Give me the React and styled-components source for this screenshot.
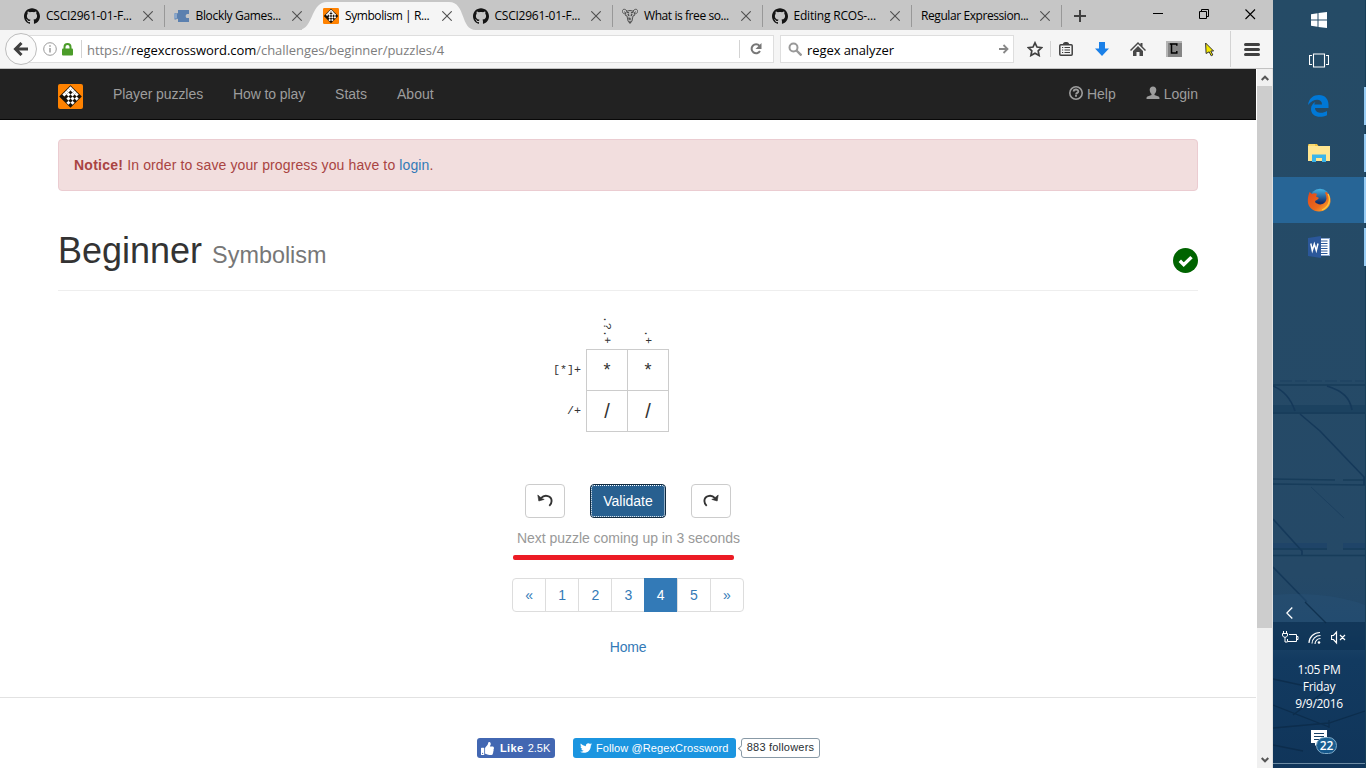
import React from "react";
import styled, { createGlobalStyle } from "styled-components";
import { SiGithub } from "react-icons/si";
import { FaTwitter, FaThumbsUp } from "react-icons/fa";

const GlobalStyle = createGlobalStyle`
  * { box-sizing: border-box; }
  html, body { margin: 0; padding: 0; overflow: hidden; }
  svg { display: block; flex: none; }
  a { color: #337ab7; text-decoration: none; }
`;

const ui = `"Open Sans", "Noto Sans", sans-serif`;

const Desktop = styled.div`
  display: flex;
  width: 1366px;
  height: 768px;
  background: #fff;
`;

const Browser = styled.div`
  width: 1273px;
  height: 768px;
  display: flex;
  flex-direction: column;
`;

/* ---------- tab strip ---------- */

const TabStrip = styled.div`
  height: 30px;
  background: #c6c6c6;
  display: flex;
  padding-left: 15px;
  font: 12px/30px ${ui};
  color: #000;
`;

const Tab = styled.div`
  position: relative;
  width: 149.5px;
  height: 30px;
  display: flex;
  align-items: center;
  padding: 2px 12px 0 9px;
  flex: none;
  &::after {
    content: "";
    position: absolute;
    right: 0;
    top: 5px;
    width: 1px;
    height: 22px;
    background: ${(p) => (p.$noLine ? "transparent" : "#989898")};
  }
`;

const TabShape = styled.svg`
  position: absolute;
  left: -12px;
  top: 0;
`;

const TabTitle = styled.span`
  position: relative;
  margin-left: ${(p) => (p.$bare ? 0 : 6)}px;
  flex: 1;
  white-space: nowrap;
  letter-spacing: ${(p) => p.$ls || 0}px;
`;

const TabIcon = styled.span`
  position: relative;
  width: 16px;
  height: 16px;
  color: #141414;
`;

const TabClose = styled.svg`
  position: relative;
`;

const WindowButtons = styled.div`
  display: flex;
  margin-left: auto;
  align-items: flex-start;
  padding: 8px 17px 0 0;
  gap: 34px;
`;

const NewTab = styled.div`
  padding: 10px 0 0 12px;
`;

/* ---------- toolbar ---------- */

const Toolbar = styled.div`
  height: 39px;
  background: #f5f5f5;
  border-bottom: 1px solid #c2c2c2;
  display: flex;
  align-items: flex-start;
  padding: 5px 0 0 5px;
`;

const BackButton = styled.div`
  position: relative;
  width: 32px;
  height: 32px;
  margin-top: -2px;
  border: 1px solid #bdbdbd;
  border-radius: 50%;
  background: #fafafa;
  display: flex;
  align-items: center;
  justify-content: center;
  z-index: 1;
`;

const AddressBar = styled.div`
  width: 308px;
  flex: none;
  height: 28px;
  background: #fff;
  border: 1px solid #dedede;
  display: flex;
  align-items: center;
  font: 13px/28px ${ui};
  color: #7d7d7d;
  white-space: nowrap;
  b { font-weight: 400; color: #000; }
`;

const UrlBar = styled(AddressBar)`
  width: 747px;
  margin-left: -10px;
  padding: 0 11px 0 15px;
`;

const UrlText = styled.span`
  margin-left: 5px;
  padding-top: 2px;
  flex: 1;
  letter-spacing: ${(p) => p.$ls}px;
`;

const SearchBar = styled(AddressBar)`
  width: 234px;
  margin-left: 6px;
  padding: 0 4px 0 7px;
`;

const SearchText = styled.span`
  margin-left: 5px;
  padding-top: 2px;
  flex: 1;
  color: #000;
  letter-spacing: ${(p) => p.$ls}px;
`;

const VLine = styled.div`
  width: 1px;
  height: ${(p) => p.$h}px;
  background: #d3d3d3;
  margin-left: ${(p) => p.$ml || 0}px;
`;

const Tools = styled.div`
  display: flex;
  align-items: center;
  height: 28px;
  padding-left: 13px;
`;

const Tool = styled.div`
  margin-left: ${(p) => p.$ml || 0}px;
`;

/* ---------- page ---------- */

const Viewport = styled.div`
  display: flex;
  height: 699px;
`;

const Page = styled.div`
  width: 1256px;
  height: 699px;
  font: 14px/20px "Liberation Sans", Arial, sans-serif;
  color: #333;
  display: flex;
  flex-direction: column;
  align-items: center;
`;

const Navbar = styled.nav`
  width: 1256px;
  height: 51px;
  background: #222;
  border-bottom: 1px solid #080808;
  display: flex;
  padding: 15px 58px 0;
  color: #9d9d9d;
`;

const Brand = styled.div`
  width: 55px;
`;

const NavLink = styled.div`
  margin-right: ${(p) => (p.$last ? 0 : 30)}px;
  letter-spacing: ${(p) => p.$ls || 0}px;
  display: flex;
  gap: 4px;
  height: 20px;
`;

const NavRight = styled.div`
  margin-left: auto;
  display: flex;
`;

const Alert = styled.div`
  width: 1140px;
  height: 52px;
  margin-top: 19px;
  padding: 15px;
  border: 1px solid #ebccd1;
  border-radius: 4px;
  background: #f2dede;
  color: #a94442;
  letter-spacing: 0.12px;
  strong { letter-spacing: 0.25px; }
`;

const PageHeader = styled.header`
  width: 1140px;
  height: 60px;
  margin-top: 40px;
  border-bottom: 1px solid #eee;
  display: flex;
  justify-content: space-between;
`;

const Title = styled.h1`
  margin: 0;
  font-weight: 400;
  font-size: 36px;
  line-height: 40px;
`;

const Subtitle = styled.small`
  font-size: 23.4px;
  color: #777;
`;

const Solved = styled.div`
  padding-top: 17px;
`;

const Puzzle = styled.div`
  display: grid;
  grid-template-columns: 74px 83px;
  grid-template-rows: 33px 83px;
  width: 232px;
  margin-top: 25px;
  font-family: "Liberation Mono", monospace;
`;

const TopClues = styled.div`
  grid-column: 2;
  display: flex;
  align-items: flex-end;
  padding: 0 0 5px;
`;

const TopClue = styled.div`
  width: 41px;
  writing-mode: vertical-rl;
  text-align: end;
  font-size: 11.6px;
  line-height: 39px;
`;

const SideClues = styled.div`
  text-align: right;
  padding-right: 5px;
  font-size: 11.7px;
  line-height: 41px;
  padding-top: 1px;
`;

const Cells = styled.div`
  display: grid;
  grid-template-columns: 41px 41px;
  grid-template-rows: 41px 41px;
  border: solid #ccc;
  border-width: 1px 0 0 1px;
`;

const Cell = styled.div`
  border: solid #ccc;
  border-width: 0 1px 1px 0;
  text-align: center;
  font: ${(p) => p.$size || 18}px/40px "Liberation Sans", sans-serif;
`;

const Controls = styled.div`
  display: flex;
  gap: 25px;
  margin-top: 52px;
`;

const Button = styled.button`
  width: 40px;
  height: 34px;
  padding: 0;
  border: 1px solid #ccc;
  border-radius: 4px;
  background: #fff;
  display: flex;
  align-items: center;
  justify-content: center;
`;

const PrimaryButton = styled(Button)`
  width: 76px;
  background: #286090;
  border: 1px solid #122b40;
  outline: 1px dotted #fff;
  outline-offset: -2px;
  color: #fff;
  font: 14px "Liberation Sans", sans-serif;
`;

const Countdown = styled.div`
  margin-top: 10px;
  padding-left: 1px;
  letter-spacing: -0.03px;
  color: #999;
`;

const Progress = styled.div`
  width: 221px;
  height: 5px;
  margin: 7px 9px 0 0;
  border-radius: 2px;
  background: #ec1b24;
`;

const Pagination = styled.div`
  display: flex;
  width: 232px;
  height: 34px;
  margin-top: 18px;
  border: 1px solid #ddd;
  border-radius: 4px;
`;

const PageItem = styled.a`
  flex: 1;
  text-align: center;
  line-height: 32px;
  margin: ${(p) => (p.$active ? "-1px 0 -1px -1px" : "0")};
  padding-top: ${(p) => (p.$active ? 1 : 0)}px;
  border-left: ${(p) => (p.$first ? 0 : 1)}px solid ${(p) => (p.$active ? "#337ab7" : "#ddd")};
  ${(p) => p.$active && "color:#fff;background:#337ab7;"}
`;

const HomeLink = styled.a`
  margin-top: 25px;
  letter-spacing: -0.2px;
`;

const Footer = styled.footer`
  width: 1256px;
  margin-top: 40px;
  border-top: 1px solid #e2e2e2;
  padding: 40px 0 0 477px;
  display: flex;
`;

const LikeButton = styled.div`
  width: 78px;
  height: 20px;
  border-radius: 3px;
  background: #4267b2;
  color: #fff;
  font: 11px/20px "Liberation Sans", sans-serif;
  display: flex;
  align-items: center;
  padding-left: 4px;
  white-space: nowrap;
  b { margin: 0 4px 0 6px; letter-spacing: 0.4px; }
`;

const FollowButton = styled.div`
  width: 163px;
  height: 20px;
  margin-left: 18px;
  border-radius: 3px;
  background: #1b95e0;
  color: #fff;
  font: 11px/19px "Liberation Sans", sans-serif;
  letter-spacing: 0.1px;
  display: flex;
  align-items: center;
  gap: 4px;
  padding-left: 7px;
  white-space: nowrap;
`;

const FollowerCount = styled.div`
  position: relative;
  width: 79px;
  height: 20px;
  margin-left: 5px;
  border: 1px solid #8899a6;
  border-radius: 3px;
  color: #292f33;
  font: 11px/17px "Liberation Sans", sans-serif;
  letter-spacing: 0.2px;
  text-align: center;
  &::before {
    content: "";
    position: absolute;
    left: -3px;
    top: 7px;
    width: 4px;
    height: 4px;
    background: #fff;
    border: solid #8899a6;
    border-width: 0 0 1px 1px;
    transform: rotate(45deg);
  }
`;

const Scrollbar = styled.div`
  width: 17px;
  height: 699px;
  border: solid #fff;
  border-width: 0 0 0 1px;
  border-right: 1px solid #e0e0e0;
  background: #f0f0f0;
  display: flex;
  flex-direction: column;
  align-items: center;
  padding-top: 6px;
`;

const Thumb = styled.div`
  width: 15px;
  height: 542px;
  margin: 5px 0 129px;
  background: #cdcdcd;
`;

/* ---------- taskbar ---------- */

const Taskbar = styled.aside`
  position: relative;
  width: 93px;
  height: 768px;
  background: #254b66;
  color: #fff;
  font: 12px/17px ${ui};
  display: flex;
  flex-direction: column;
`;

const Wallpaper = styled.svg`
  position: absolute;
  left: 0;
  top: 0;
`;

const TaskItem = styled.div`
  position: relative;
  height: ${(p) => p.$h || 47}px;
  display: flex;
  align-items: center;
  justify-content: center;
  padding-right: 1px;
  flex: none;
`;

const AppItem = styled(TaskItem)`
  height: 46px;
  padding-right: 2px;
  margin-bottom: 1px;
  background: ${(p) => (p.$active ? "#276596" : "transparent")};
  &::after {
    content: "";
    position: absolute;
    right: 0;
    top: ${(p) => (p.$active ? 0 : 4)}px;
    width: 2px;
    height: ${(p) => (p.$active ? 46 : 38)}px;
    background: #99cdf5;
  }
`;

const Chevron = styled.div`
  position: relative;
  margin: 336px 0 0 13px;
`;

const Tray = styled.div`
  position: relative;
  display: flex;
  gap: 9px;
  margin: 11px 0 0 9px;
  height: 15px;
`;

const Clock = styled.div`
  position: relative;
  text-align: center;
  margin-top: 16px;
  padding-right: 1px;
  div { letter-spacing: -0.3px; }
`;

const ActionCenter = styled.div`
  position: relative;
  margin: 18px 0 0 38px;
`;

const Badge = styled.div`
  position: absolute;
  left: 5px;
  top: 7px;
  width: 21px;
  height: 17px;
  border-radius: 9px;
  border: 1px solid #7ea9c6;
  background: linear-gradient(#1d6394, #14568a);
  font: 600 12px/15px ${ui};
  text-align: center;
`;

/* ---------- drawings ---------- */

const LOGO_CELLS = ["11110", "10101", "11010", "10101", "00010"];

const RegexLogo = ({ size }) => (
  <svg width={size} height={size} viewBox="0 0 25 25">
    <rect width="25" height="25" rx="2" fill="#ff8200" />
    <path d="M12.5 1.2l11.300 11.300-11.300 11.300L1.200 12.500z" fill="#1a1208" />
    <g fill="#fff" transform="translate(12.5 2.300) rotate(45)">
      {LOGO_CELLS.flatMap((row, j) =>
        [...row].map((c, i) =>
          c === "1" ? <rect key={`${i}-${j}`} x={i * 2.9} y={j * 2.9} width="2.9" height="2.9" /> : null
        )
      )}
    </g>
  </svg>
);

const Puzzlet = () => (
  <svg width="16" height="16" viewBox="0 0 16 16">
    <path fill="#5b80af" d="M4 2h11v4h-1c-3-1-3 5 0 4h1v4H4v-3C3 10 2 12 .5 11.500V5.500C2 5 3 6 4 5z" />
    <path fill="#8ba7ca" d="M0 5.500h3v5H0z" />
  </svg>
);

const Gnu = () => (
  <svg width="16" height="16" viewBox="0 0 16 16" fill="none" stroke="#555" strokeWidth="1">
    <path d="M5 3C2-.5-.5 2 .7 4.500 2 7 4 4.500 2.500 3.500M11 3c3-3.500 5.500-1 4.300 1.500-1.300 2.500-3.300 0-1.800-1" />
    <path d="M4 4c2-2 6-2 8 0l1 3-2 1-1 5-2 2.500L6 13 5 8 3 7z" fill="#b5b5b5" />
    <path d="M6 6l1 2M10 6L9 8M7 11h2M7 9.500v2M8 13v2M5 4l2 1M11 4L9 5" stroke="#333" />
  </svg>
);

const Cross = () => (
  <TabClose width="10" height="10" viewBox="0 0 10 10" stroke="#505050" strokeWidth="1.1">
    <path d="M.3.3l9.400 9.400M9.700.3L.3 9.700" />
  </TabClose>
);

const githubIcon = <SiGithub size={16} />;

const TABS = [
  { title: "CSCI2961-01-F...", icon: githubIcon, ls: -0.25 },
  { title: "Blockly Games...", icon: <Puzzlet />, noLine: true, ls: -0.33 },
  { title: "Symbolism | R...", icon: <RegexLogo size={16} />, active: true, noLine: true, ls: -0.42 },
  { title: "CSCI2961-01-F...", icon: githubIcon, ls: -0.25 },
  { title: "What is free so...", icon: <Gnu />, ls: -0.42 },
  { title: "Editing RCOS-...", icon: githubIcon, ls: -0.2 },
  { title: "Regular Expression...", ls: -0.42 },
];

const Tabs = () => (
  <TabStrip>
    {TABS.map((t, i) => (
      <Tab key={i} $noLine={t.noLine}>
        {t.active && (
          <TabShape width="176" height="30" viewBox="0 0 176 30">
            <path fill="#f5f5f5" d="M-4 30C12 30 8 2 25 2H147C164 2 158 30 174 30z" />
          </TabShape>
        )}
        {t.icon && <TabIcon>{t.icon}</TabIcon>}
        <TabTitle $bare={!t.icon} $ls={t.ls}>{t.title}</TabTitle>
        <Cross />
      </Tab>
    ))}
    <NewTab>
      <svg width="13" height="12" viewBox="0 0 13 12" stroke="#404040" strokeWidth="2"><path d="M0 6h12M6 0v12" /></svg>
    </NewTab>
    <WindowButtons>
      <svg width="12" height="12" viewBox="0 0 12 12"><path d="M1 5.500h10" stroke="#000" /></svg>
      <svg width="12" height="12" viewBox="0 0 12 12" fill="none" stroke="#000"><path d="M1.500 3.500h7v7h-7zM3.500 3.500v-2h7v7h-2" /></svg>
      <svg width="12" height="12" viewBox="0 0 12 12" stroke="#000" strokeWidth="1.100"><path d="M1.500 1.500l9.500 9.500M11 1.500L1.500 11" /></svg>
    </WindowButtons>
  </TabStrip>
);

const BrowserToolbar = () => (
  <Toolbar>
    <BackButton>
      <svg width="16" height="14" viewBox="0 0 16 14" fill="none" stroke="#404040" strokeWidth="3"><path d="M15 7H3M8.500 1L2.500 7l6 6" /></svg>
    </BackButton>
    <UrlBar>
      <svg width="14" height="14" viewBox="0 0 14 14" fill="none" stroke="#9a9a9a"><circle cx="7" cy="7" r="6.300" /><path d="M7 6v4.500M7 3.300v1.500" strokeWidth="1.500" /></svg>
      <Tool $ml={5}>
        <svg width="11" height="13" viewBox="0 0 11 13"><path fill="none" stroke="#4b9c29" strokeWidth="2" d="M2.500 6V4a3 3 0 016 0v2" /><rect y="5.500" width="11" height="7" rx="1" fill="#4b9c29" /></svg>
      </Tool>
      <VLine $h={18} $ml={8} />
      <UrlText $ls={-0.05}>https://<b>regexcrossword.com</b>/challenges/beginner/puzzles/4</UrlText>
      <VLine $h={18} />
      <Tool $ml={10}>
        <svg width="12" height="12" viewBox="0 0 12 12"><path fill="none" stroke="#777" strokeWidth="2" d="M9.500 2.800A4.500 4.500 0 1010 8" /><path fill="#777" d="M11.500 0v6h-6z" /></svg>
      </Tool>
    </UrlBar>
    <SearchBar>
      <svg width="14" height="14" viewBox="0 0 14 14" fill="none" stroke="#999" strokeWidth="2"><circle cx="5.500" cy="5.500" r="4" /><path d="M8.500 8.500l5 5" strokeWidth="2.400" /></svg>
      <SearchText $ls={-0.08}>regex analyzer</SearchText>
      <svg width="10" height="10" viewBox="0 0 10 10" fill="none" stroke="#888" strokeWidth="1.800"><path d="M0 5h8.500M4.500 1l4 4-4 4" /></svg>
    </SearchBar>
    <Tools>
      <svg width="16" height="16" viewBox="0 0 16 16" fill="none" stroke="#404040" strokeWidth="1.700"><path d="M8 1.800l2 4.200 4.600.6-3.400 3.200.9 4.700L8 12.200l-4.100 2.300.9-4.700L1.400 6.600 6 6z" /></svg>
      <VLine $h={16} $ml={7} />
      <Tool $ml={8}>
        <svg width="14" height="14" viewBox="0 0 14 14" fill="none" stroke="#404040" strokeWidth="1.500"><rect x=".8" y="2.800" width="12.400" height="10.400" rx="1" /><path d="M4.500 2.500C5 0 9 0 9.500 2.500" fill="#404040" /><path d="M3 5.500h1.200M3 8h1.200M3 10.500h1.200M5.500 5.500H11M5.500 8H11M5.500 10.500H11" strokeWidth="1.200" /></svg>
      </Tool>
      <Tool $ml={22}>
        <svg width="14" height="14" viewBox="0 0 14 14" fill="#1a80e8"><path d="M4 0h6v6.500h4L7 14 0 6.500h4z" /></svg>
      </Tool>
      <Tool $ml={21}>
        <svg width="16" height="14" viewBox="0 0 16 14" fill="#484848"><path d="M8 0l2.500 2.500V1h2v3.500L16 8l-1 1-7-7-7 7-1-1z" /><path d="M8 4l5 5v5H9.500v-4h-3v4H3V9z" /></svg>
      </Tool>
      <Tool $ml={20}>
        <svg width="16" height="16" viewBox="0 0 16 16"><rect width="16" height="16" fill="#858585" /><path d="M1 16V1h15" fill="none" stroke="#b5b5b5" strokeWidth="2" /><path d="M3.800 3h7v1.800M5.500 3v9h5.300v-2" fill="none" stroke="#000" strokeWidth="1.500" /></svg>
      </Tool>
      <Tool $ml={23}>
        <svg width="10" height="15" viewBox="0 0 10 15"><path d="M.6 1l8 8H5.800l2 4-1.600.8-2-4-3.100 1.700z" fill="#f5e900" stroke="#333" strokeWidth="1" /></svg>
      </Tool>
      <VLine $h={36} $ml={15} />
      <Tool $ml={13}>
        <svg width="16" height="13" viewBox="0 0 16 13" stroke="#404040" strokeWidth="3" strokeLinecap="round"><path d="M1.500 1.500h13M1.500 6.500h13M1.500 11.500h13" /></svg>
      </Tool>
    </Tools>
  </Toolbar>
);

const UndoArrow = () => (
  <svg width="16" height="14" viewBox="0 0 16 14"><path d="M4 4.200C8-.2 14.600 2 14.600 7c0 2-.8 3.600-2.300 4.900" fill="none" stroke="#333" strokeWidth="1.900" /><path d="M.8 1l1 6 5.400-1.600-2-.7z" fill="#333" stroke="#333" strokeWidth=".6" /></svg>
);

const RedoArrow = () => (
  <svg width="16" height="14" viewBox="0 0 16 14"><path d="M12 4.200C8-.2 1.400 2 1.400 7c0 2 .8 3.600 2.300 4.900" fill="none" stroke="#333" strokeWidth="1.900" /><path d="M15.200 1l-1 6-5.400-1.600 2-.7z" fill="#333" stroke="#333" strokeWidth=".6" /></svg>
);

const PuzzlePage = () => (
  <Page>
    <Navbar>
      <Brand><RegexLogo size={25} /></Brand>
      <NavLink $ls={-0.07}>Player puzzles</NavLink>
      <NavLink $ls={-0.1}>How to play</NavLink>
      <NavLink>Stats</NavLink>
      <NavLink>About</NavLink>
      <NavRight>
        <NavLink>
          <svg width="14" height="16" viewBox="0 0 14 16" fill="none" stroke="#9d9d9d"><circle cx="7" cy="9" r="6.200" strokeWidth="1.600" /><path d="M4.700 7.600c0-2.700 4.600-2.700 4.600-.2 0 1.600-2.200 1.300-2.200 3M7 11v1.800" strokeWidth="1.900" /></svg>
          Help
        </NavLink>
        <NavLink $last>
          <svg width="14" height="16" viewBox="0 0 14 16" fill="#9d9d9d"><path d="M7 2.500c2 0 3.300 1.300 3.300 3.200 0 2-.8 3.300-1.800 4.200v1.200l4 1.500c.8.300 1 .9 1 2.400H.5c0-1.500.2-2.100 1-2.400l4-1.500V9.900c-1-.9-1.800-2.200-1.800-4.200 0-1.900 1.300-3.200 3.300-3.200z" /></svg>
          Login
        </NavLink>
      </NavRight>
    </Navbar>
    <Alert><strong>Notice!</strong> In order to save your progress you have to <a>login</a>.</Alert>
    <PageHeader>
      <Title>Beginner <Subtitle>Symbolism</Subtitle></Title>
      <Solved>
        <svg width="25" height="25" viewBox="0 0 25 25"><circle cx="12.500" cy="12.500" r="12.500" fill="#006400" /><path d="M6.800 12.800l3.900 3.900 7.800-7.600" fill="none" stroke="#fff" strokeWidth="3.400" /></svg>
      </Solved>
    </PageHeader>
    <Puzzle>
      <TopClues>
        <TopClue>.?.+</TopClue>
        <TopClue>.+</TopClue>
      </TopClues>
      <SideClues>
        <div>[*]+</div>
        <div>/+</div>
      </SideClues>
      <Cells>
        <Cell>*</Cell>
        <Cell>*</Cell>
        <Cell $size={20}>/</Cell>
        <Cell $size={20}>/</Cell>
      </Cells>
    </Puzzle>
    <Controls>
      <Button><UndoArrow /></Button>
      <PrimaryButton>Validate</PrimaryButton>
      <Button><RedoArrow /></Button>
    </Controls>
    <Countdown>Next puzzle coming up in 3 seconds</Countdown>
    <Progress />
    <Pagination>
      {["«", "1", "2", "3", "4", "5", "»"].map((n, i) => (
        <PageItem key={n} $first={i === 0} $active={n === "4"}>{n}</PageItem>
      ))}
    </Pagination>
    <HomeLink>Home</HomeLink>
    <Footer>
      <LikeButton><FaThumbsUp size={13} /><b>Like</b>2.5K</LikeButton>
      <FollowButton><FaTwitter size={12} />Follow @RegexCrossword</FollowButton>
      <FollowerCount>883 followers</FollowerCount>
    </Footer>
  </Page>
);

const Scroll = () => (
  <Scrollbar>
    <svg width="8" height="6" viewBox="0 0 8 6" fill="none" stroke="#555" strokeWidth="2"><path d="M.7 5L4 1.700 7.300 5" /></svg>
    <Thumb />
    <svg width="8" height="6" viewBox="0 0 8 6" fill="none" stroke="#555" strokeWidth="2"><path d="M.7 1L4 4.300 7.300 1" /></svg>
  </Scrollbar>
);

const Backdrop = () => (
  <Wallpaper width="93" height="768" viewBox="0 0 93 768" fill="none">
    <defs>
      <linearGradient id="sky" x1="0" y1="0" x2="0" y2="1">
        <stop offset="0" stopColor="#254b66" />
        <stop offset=".75" stopColor="#254967" />
        <stop offset=".82" stopColor="#20476a" />
        <stop offset=".86" stopColor="#123a60" />
        <stop offset="1" stopColor="#10355a" />
      </linearGradient>
    </defs>
    <rect width="93" height="768" fill="url(#sky)" />
    <rect y="405" width="92" height="9" fill="#1c4260" />
    <rect y="543" width="54" height="7" fill="#1f4468" />
    <rect x="70" y="543" width="22" height="7" fill="#1f4468" />
    <path d="M0 385h92M0 413h92M0 555.500h92M0 479l62 1M70 480h22M0 484l92 1M0 549h54M70 549h22" stroke="#173c5a" strokeWidth="1.300" />
    <path d="M7 381h84" stroke="#1c4060" strokeWidth="1" strokeDasharray="12 3" />
    <path d="M0 386c12 5 18 13 22 25M54 386c16 5 23 12 25 24M27 414l20 17 44 46v8M0 519l29 32v4M0 567l34 35" stroke="#15395a" strokeWidth="1.600" />
    <path d="M38 487l33 31" stroke="#1c4060" />
    <path d="M0 595c40-3 70 2 92 10v17H0z" fill="#295377" opacity=".4" />
    <rect y="622" width="93" height="28" fill="#0b3052" opacity=".65" />
    <path d="M32 602l21 21M0 679l37 8M0 705l56 22M0 728l56-5 36-12M56 728v-8M20 715l40-30M0 745l30 6" stroke="#0b2a49" strokeWidth="1.300" opacity=".8" />
    <path d="M0 763.500h93" stroke="#6c8ba4" />
    <path d="M92.500 0v768" stroke="#163f59" />
  </Wallpaper>
);

const FirefoxIcon = () => (
  <svg width="24" height="24" viewBox="0 0 24 24">
    <defs>
      <linearGradient id="fox" x1="0" y1="0" x2="1" y2="1"><stop offset="0" stopColor="#e0481c" /><stop offset=".6" stopColor="#ec6b1c" /><stop offset="1" stopColor="#ffc43a" /></linearGradient>
      <linearGradient id="globe" x1="0" y1="0" x2="0" y2="1"><stop offset="0" stopColor="#47b4e4" /><stop offset=".7" stopColor="#13306e" /></linearGradient>
    </defs>
    <circle cx="13" cy="10.500" r="9.800" fill="url(#globe)" />
    <path fill="url(#fox)" d="M2.500 4L5 6c2-1 4-.7 5 0L9 8.500l3 1.500-2 2c-2 .5-3 2 0 3.500 4 2.500 9 0 9.500-5 0-2-.5-4-1.500-6l1.500-.5c3 2.500 4.500 5.500 4 9.500C23 19 18 23.500 12 23.500S.8 19 .8 13c0-3.500.7-6 1.700-9z" />
    <path d="M21 6c3 6 1 13-6 16" stroke="#ffc83c" strokeWidth="1.300" fill="none" />
  </svg>
);

const DesktopTaskbar = () => (
  <Taskbar>
    <Backdrop />
    <TaskItem $h={40}>
      <svg width="16" height="16" viewBox="0 0 16 16" fill="#fff"><path d="M0 2.200l6.500-.9v6.200H0zM7.500 1.100L16 0v7.500H7.500zM0 8.500h6.500v6.200L0 13.800zM7.500 8.500H16V16l-8.500-1.100z" /></svg>
    </TaskItem>
    <TaskItem $h={40}>
      <svg width="20" height="15" viewBox="0 0 20 15" fill="none" stroke="#fff" strokeWidth="1.100"><path d="M4.500 1h11v13h-11zM3 2.500H.5v9H3M17 2.500h2.500v9H17" /></svg>
    </TaskItem>
    <TaskItem $h={3} />
    <AppItem>
      <svg width="21" height="22" viewBox="0 0 21 22"><path fill="#0078d7" d="M0 10C1 3 5.500 0 11 0c6 0 9.500 4.200 9.500 9.500V13H7c.3 5.500 7.500 6 12 3v4.200C11 24 3 21 3 14c0-3.500 2-5.800 4.500-7C6.700 8 6.500 8.500 6.300 9.500H14C14 3 5 3.500 0 10z" /></svg>
    </AppItem>
    <AppItem>
      <svg width="22" height="18" viewBox="0 0 22 18"><path fill="#f3c443" d="M0 1.500C0 .5.500 0 1 0h8l1.500 2H22v8H0z" /><rect y="2" width="22" height="15" fill="#ffe691" /><path d="M1 1h6" stroke="#fff0a0" /><path fill="#3ab5ea" d="M4 18v-7.500h14V18h-4v-4H8v4z" /></svg>
    </AppItem>
    <AppItem $active><FirefoxIcon /></AppItem>
    <AppItem>
      <svg width="22" height="22" viewBox="0 0 22 22"><rect x="11" y="2.500" width="10.500" height="17" fill="#fff" stroke="#8aa6d0" /><path d="M13 5h6.500M13 7.500h6.500M13 10h6.500M13 12.500h6.500M13 15h6.500M13 17.500h6.500" stroke="#2b579a" strokeWidth="1" /><path d="M0 2l13-2v22L0 20z" fill="#2b579a" /><path d="M2.800 7.500l1.500 7 2-6.500 2 6.500 1.700-7" fill="none" stroke="#fff" strokeWidth="1.500" /></svg>
    </AppItem>
    <Chevron>
      <svg width="7" height="12" viewBox="0 0 7 12" fill="none" stroke="#fff" strokeWidth="1.300"><path d="M6.300.5L.8 6l5.500 5.500" /></svg>
    </Chevron>
    <Tray>
      <svg width="17" height="15" viewBox="0 0 17 15" fill="none" stroke="#fff"><path d="M7 4.500h7.500v7h-9V9M14.500 6.500h1.500v3h-1.500M1.500 1v2M4.500 1v2M.5 3.500h5V5c0 3-5 3-5 0zM3 7v5h2.500" /></svg>
      <svg width="14" height="15" viewBox="0 0 14 15" fill="none" stroke="#fff" strokeWidth="1.100"><path d="M1 13C1 7 6 2.500 12 2.500M4 13.500C4 9 7.500 5.500 12.500 5.500M7 14c0-3 2.500-5.500 5.500-5.500" /><circle cx="11" cy="12.500" r="1.300" fill="#fff" stroke="none" /></svg>
      <svg width="16" height="15" viewBox="0 0 16 15" fill="none" stroke="#fff"><path d="M.5 5.500h2L5.500 2v11l-3-3.500h-2zM9 5l5 5M14 5l-5 5" strokeWidth="1.200" /></svg>
    </Tray>
    <Clock>
      <div>1:05 PM</div>
      <div>Friday</div>
      <div>9/9/2016</div>
    </Clock>
    <ActionCenter>
      <svg width="17" height="16" viewBox="0 0 17 16"><path d="M0 0h16v13H7l-3 3v-3H0z" fill="#fff" /><path d="M3 3.500h10M3 6.500h10M3 9.500h7" stroke="#174066" /></svg>
      <Badge>22</Badge>
    </ActionCenter>
  </Taskbar>
);

export default function App() {
  return (
    <>
      <GlobalStyle />
      <Desktop>
        <Browser>
          <Tabs />
          <BrowserToolbar />
          <Viewport>
            <PuzzlePage />
            <Scroll />
          </Viewport>
        </Browser>
        <DesktopTaskbar />
      </Desktop>
    </>
  );
}
